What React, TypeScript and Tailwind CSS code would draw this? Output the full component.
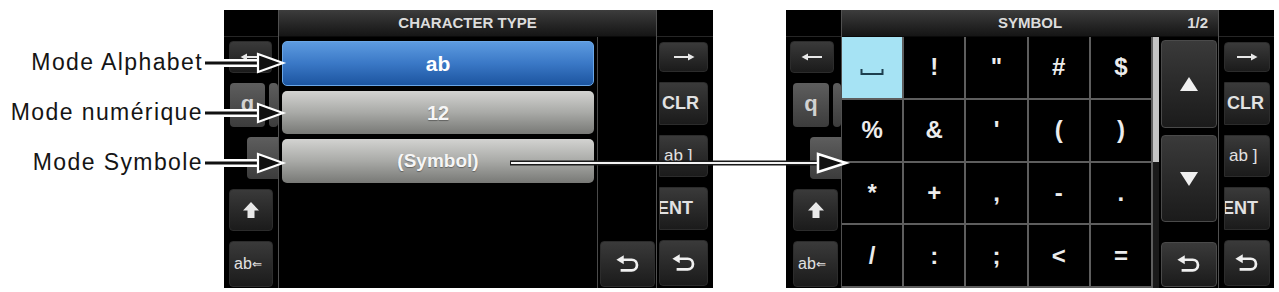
import React from "react";

const FONT = { fontFamily: '"Liberation Sans", Arial, sans-serif' };

const BackIcon = () => (
  <svg width="26" height="19" viewBox="0 0 24 18">
    <path d="M7 4.5H15.5a5 5 0 0 1 0 10H5" fill="none" stroke="#f0f0f0" strokeWidth="2.6" />
    <path d="M1 4.5L8 0.3V8.7Z" fill="#f0f0f0" />
  </svg>
);

const ThinArrow = ({ dir }: { dir: "left" | "right" }) => (
  <svg width="22" height="10" viewBox="0 0 22 10" style={{ transform: dir === "left" ? "scaleX(-1)" : undefined }}>
    <path d="M1 5H19" stroke="#e8e8e8" strokeWidth="1.8" />
    <path d="M21.5 5L15 1.5V8.5Z" fill="#e8e8e8" />
  </svg>
);

const UpBlock = () => (
  <svg width="18" height="18" viewBox="0 0 18 18">
    <path d="M9 1L17 9.5H12.5V17H5.5V9.5H1Z" fill="#e8e8e8" />
  </svg>
);

const DarkKey = ({ className, children }: { className: string; children?: React.ReactNode }) => (
  <div
    className={`rounded-[4px] bg-linear-to-b from-[#3a3a3a] to-[#1b1b1b] border border-[#2c2c2c] flex items-center text-[#e2e2e2] overflow-hidden ${className}`}
  >
    {children}
  </div>
);

const LightKey = ({ className, children }: { className: string; children?: React.ReactNode }) => (
  <div
    className={`rounded-[4px] bg-linear-to-b from-[#5e5e5e] to-[#3c3c3c] flex items-center justify-center text-[#d2d2d2] overflow-hidden ${className}`}
  >
    {children}
  </div>
);

const LeftKeys = ({ w, arrowMl, arrowW, qMl, qW, rowMl, rowW, bMl, bW }: any) => (
  <div className="flex flex-col shrink-0" style={{ width: w }}>
    <div className="h-[27px] border-b border-[#262626]" />
    <div className="flex flex-col pt-[4px] gap-[10px]">
      <div style={{ marginLeft: arrowMl, width: arrowW }} className="h-[32px]">
        <DarkKey className="h-full w-full justify-center">
          <ThinArrow dir="left" />
        </DarkKey>
      </div>
      <div className="h-[44px] flex gap-[4px]" style={{ marginLeft: qMl }}>
        <LightKey className="h-full text-[22px] font-bold">
          <span style={{ width: qW }} className="text-center pb-[4px]">q</span>
        </LightKey>
        <LightKey className="h-full flex-1" />
      </div>
      <div className="h-[42px]" style={{ marginLeft: rowMl, width: rowW }}>
        <LightKey className="h-full w-full rounded-r-none" />
      </div>
      <div className="h-[42px]" style={{ marginLeft: bMl, width: bW }}>
        <DarkKey className="h-full w-full justify-center">
          <UpBlock />
        </DarkKey>
      </div>
      <div className="h-[46px]" style={{ marginLeft: bMl, width: bW }}>
        <DarkKey className="h-full w-full pl-[4px] text-[16px]">
          <span>ab</span>
          <span className="text-[12px]">⇐</span>
        </DarkKey>
      </div>
    </div>
  </div>
);

const RightKeys = ({ w, ml, kw }: { w: number; ml: number; kw: number }) => (
  <div className="flex flex-col shrink-0" style={{ width: w }}>
    <div className="h-[27px] border-b border-[#262626]" />
    <div className="flex flex-col pt-[5px] gap-[10px]" style={{ paddingLeft: ml, width: ml + kw }}>
      <DarkKey className="h-[30px] justify-center">
        <ThinArrow dir="right" />
      </DarkKey>
      <DarkKey className="h-[43px] rounded-l-none text-[18px] font-bold pl-[2px]">
        <span>CLR</span>
      </DarkKey>
      <DarkKey className="h-[42px] rounded-l-none text-[17px] pl-[4px]">
        <span>ab&nbsp;]</span>
      </DarkKey>
      <DarkKey className="h-[43px] rounded-l-none text-[18px] font-bold">
        <span className="-ml-[3px]">ENT</span>
      </DarkKey>
      <DarkKey className="h-[46px] justify-center">
        <BackIcon />
      </DarkKey>
    </div>
  </div>
);

const TitleBar = ({ children }: { children: React.ReactNode }) => (
  <div className="h-[27px] bg-linear-to-b from-[#3d3d3d] to-[#151515] border-b border-[#0a0a0a] flex items-center text-[#dcdcdc] text-[15px] font-bold">
    {children}
  </div>
);

const symbols = [
  ["", "!", '"', "#", "$"],
  ["%", "&", "'", "(", ")"],
  ["*", "+", ",", "-", "."],
  ["/", ":", ";", "<", "="],
];

export default function App() {
  return (
    <div className="relative w-[1279px] h-[292px] bg-white flex overflow-hidden" style={FONT}>
      {/* labels */}
      <div className="w-[224px] shrink-0 flex flex-col items-end pr-[21px] pt-[37px] text-[23px] text-[#151515] tracking-[1.4px]">
        <div className="h-[50px] flex items-center">Mode Alphabet</div>
        <div className="h-[50px] flex items-center">Mode numérique</div>
        <div className="h-[50px] flex items-center">Mode Symbole</div>
      </div>

      {/* left screen */}
      <div className="w-[489px] h-[278px] mt-[10px] bg-black flex shrink-0">
        <LeftKeys w={54} arrowMl={5} arrowW={43} qMl={6} qW={35} rowMl={23} rowW={31} bMl={5} bW={44} />
        <div className="w-[379px] shrink-0 border-x border-[#505050] flex flex-col relative z-10 bg-black">
          <TitleBar>
            <div className="w-full text-center">CHARACTER TYPE</div>
          </TitleBar>
          <div className="flex flex-1">
            <div className="w-[315px] pl-[3px] pt-[4px] flex flex-col gap-[5px]">
              <div className="h-[45px] rounded-[5px] bg-linear-to-b from-[#5d9be0] via-[#3a78c6] to-[#1c55a0] border border-[#6aa6e6] flex items-center justify-center text-white text-[21px] font-bold">
                ab
              </div>
              <div className="h-[43px] rounded-[5px] bg-linear-to-b from-[#d3d3d1] via-[#a9aaa7] to-[#787976] flex items-center justify-center text-[#f6f6f6] text-[20px] font-bold [text-shadow:0_1px_1px_rgba(0,0,0,0.35)]">
                12
              </div>
              <div className="h-[44px] rounded-[5px] bg-linear-to-b from-[#d3d3d1] via-[#a9aaa7] to-[#787976] flex items-center justify-center text-[#f6f6f6] text-[19px] font-bold [text-shadow:0_1px_1px_rgba(0,0,0,0.35)]">
                (Symbol)
              </div>
            </div>
            <div className="flex-1 flex">
              <div className="w-[3px]" />
              <div className="flex-1 border-l border-[#4a4a4a] flex flex-col justify-end pb-[1px] pl-[2px] pr-[1px]">
                <DarkKey className="h-[46px] justify-center">
                  <BackIcon />
                </DarkKey>
              </div>
            </div>
          </div>
        </div>
        <RightKeys w={56} ml={2} kw={49} />
      </div>

      <div className="w-[73px] shrink-0" />

      {/* right screen */}
      <div className="w-[488px] h-[278px] mt-[10px] bg-black flex shrink-0">
        <LeftKeys w={55} arrowMl={4} arrowW={44} qMl={7} qW={36} rowMl={24} rowW={31} bMl={7} bW={45} />
        <div className="w-[378px] shrink-0 border-x border-[#505050] flex flex-col relative z-10 bg-black">
          <TitleBar>
            <div className="w-[312px] text-center pl-[64px]">SYMBOL</div>
            <div className="flex-1 text-right pr-[10px]">1/2</div>
          </TitleBar>
          <div className="flex flex-1">
            <div className="w-[311px] grid grid-cols-5 grid-rows-4">
              {symbols.flat().map((s, i) => (
                <div
                  key={i}
                  className={`flex items-center justify-center border-r-2 border-b-2 border-[#5e5e5e] text-[24px] font-bold ${
                    i === 0 ? "bg-[#a6e3f4]" : "text-[#ececec]"
                  }`}
                >
                  {i === 0 ? (
                    <svg width="24" height="8" viewBox="0 0 24 8" className="mt-[12px]">
                      <path d="M1.5 0V5H22.5V0" fill="none" stroke="#1d3f4e" strokeWidth="2" />
                    </svg>
                  ) : (
                    s
                  )}
                </div>
              ))}
            </div>
            <div className="w-[6px] bg-[#1a1a1a]">
              <div className="h-[125px] bg-[#c4c4c4]" />
            </div>
            <div className="flex-1 flex flex-col pl-[2px] pr-[1px] pt-[3px]">
              <DarkKey className="h-[88px] justify-center border-[#4a4a4a]">
                <svg width="20" height="16" viewBox="0 0 20 16">
                  <path d="M10 1L19 15H1Z" fill="#f0f0f0" />
                </svg>
              </DarkKey>
              <DarkKey className="h-[87px] mt-[7px] justify-center border-[#4a4a4a]">
                <svg width="20" height="16" viewBox="0 0 20 16">
                  <path d="M10 15L19 1H1Z" fill="#f0f0f0" />
                </svg>
              </DarkKey>
              <div className="flex-1" />
              <DarkKey className="h-[45px] mb-[1px] justify-center border-[#4a4a4a]">
                <BackIcon />
              </DarkKey>
            </div>
          </div>
        </div>
        <RightKeys w={55} ml={5} kw={46} />
      </div>

      {/* callout arrows */}
      <svg className="absolute left-0 top-0 z-20 pointer-events-none" width="1279" height="292" viewBox="0 0 1279 292">
        {[63, 113, 163].map((y) => (
          <g key={y}>
            <path d={`M205 ${y}H260`} stroke="#ffffff" strokeWidth="8" />
            <path d={`M205 ${y}H262`} stroke="#111111" strokeWidth="3" />
            <path d={`M258 ${y - 9}L283 ${y}L258 ${y + 9}Z`} fill="#111111" stroke="#ffffff" strokeWidth="2.2" strokeLinejoin="miter" />
          </g>
        ))}
        <path d="M510 163H822" stroke="#1a1a1a" strokeWidth="5" />
        <path d="M511 163H822" stroke="#f4f4f4" strokeWidth="2" />
        <path d="M818 154L846 163L818 172Z" fill="#111111" stroke="#ffffff" strokeWidth="2.5" />
      </svg>
    </div>
  );
}
